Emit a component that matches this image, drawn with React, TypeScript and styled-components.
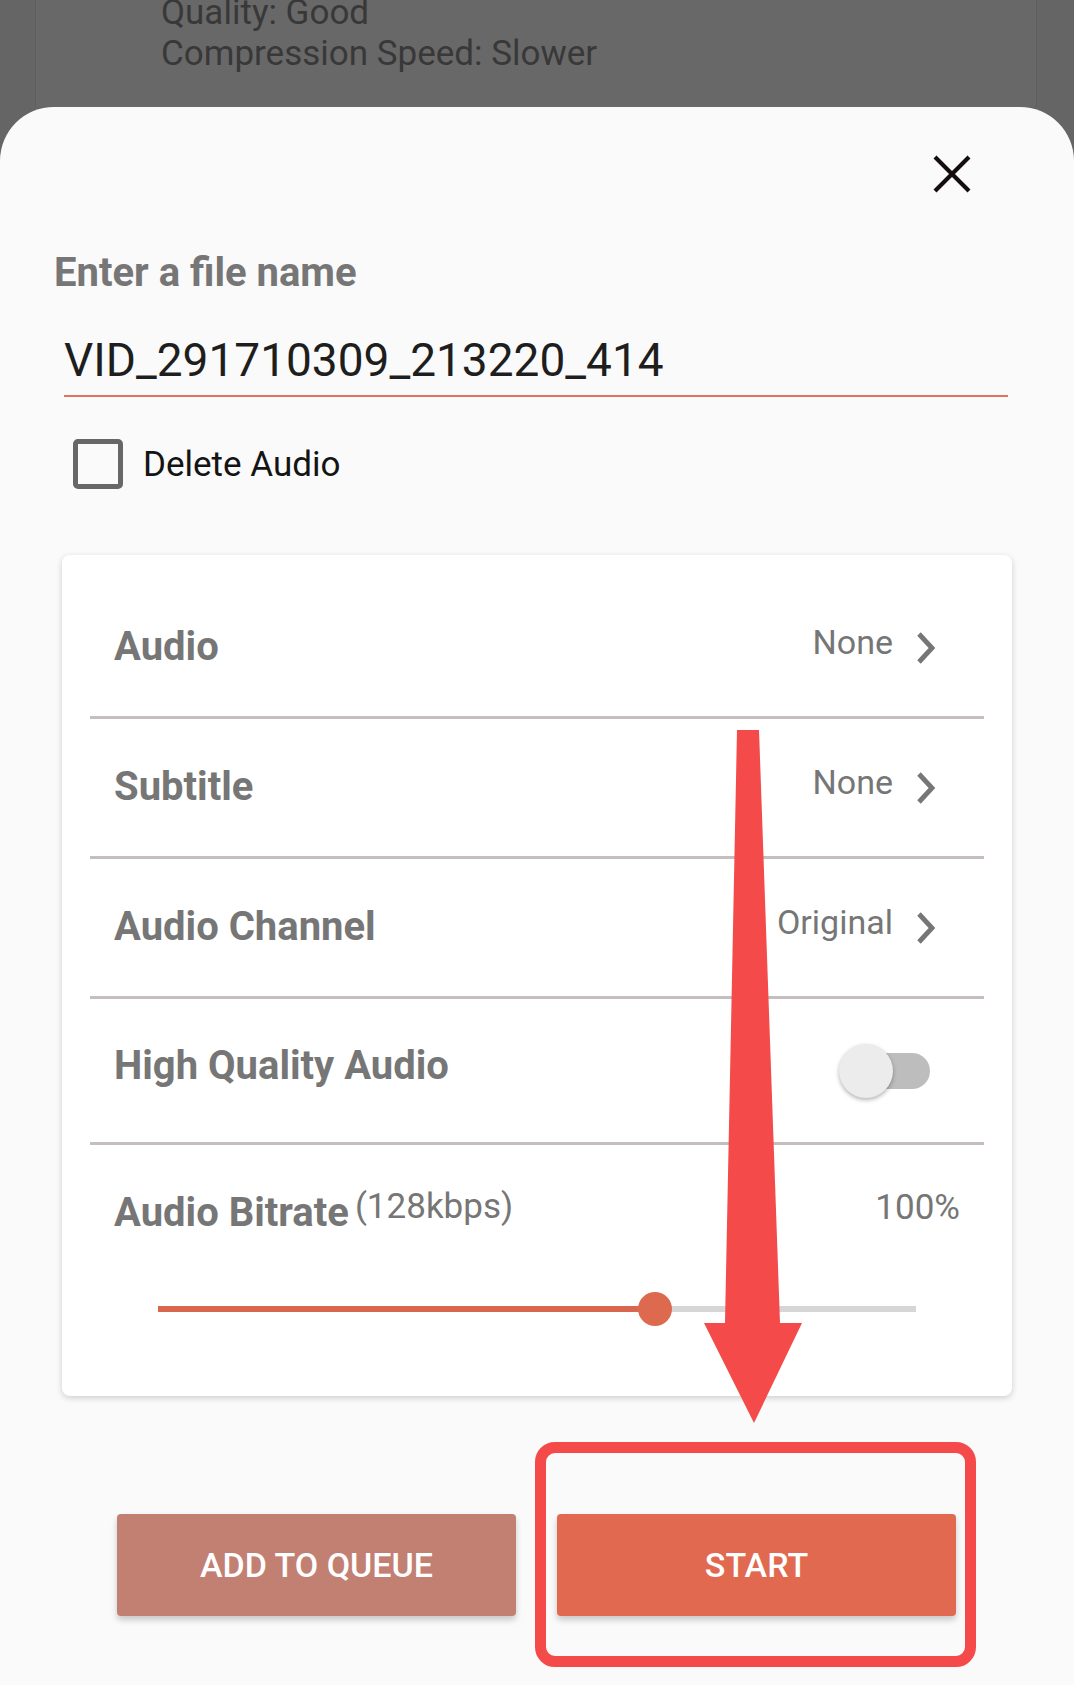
import styled, { createGlobalStyle } from "styled-components";

const GlobalStyle = createGlobalStyle`
  html, body {
    margin: 0;
    padding: 0;
    background: #656565;
    font-family: Roboto, "Liberation Sans", sans-serif;
  }
`;

const rows = [
  { label: "Audio", value: "None" },
  { label: "Subtitle", value: "None" },
  { label: "Audio Channel", value: "Original" },
];

const sliderValue = 0.656;

export default function App() {
  return (
    <>
      <GlobalStyle />
      <Page>
        <Behind>
          <BehindText>Quality: Good</BehindText>
          <BehindText>Compression Speed: Slower</BehindText>
        </Behind>
        <Sheet>
          <CloseRow>
            <CloseButton aria-label="close">
              <svg width="40" height="40" viewBox="0 0 40 40">
                <path d="M3 3 L37 37 M37 3 L3 37" stroke="#140d0d" strokeWidth="4.2" />
              </svg>
            </CloseButton>
          </CloseRow>
          <Title>Enter a file name</Title>
          <NameField>VID_291710309_213220_414</NameField>
          <CheckRow>
            <CheckBox />
            <CheckLabel>Delete Audio</CheckLabel>
          </CheckRow>
          <Card>
            {rows.map((r) => (
              <Row key={r.label}>
                <Label>{r.label}</Label>
                <Value>
                  {r.value}
                  <svg width="22" height="36" viewBox="0 0 22 36">
                    <path d="M4 4 L17 18 L4 32" fill="none" stroke="#767676" strokeWidth="4.8" />
                  </svg>
                </Value>
              </Row>
            ))}
            <Row $tall>
              <Label $up>High Quality Audio</Label>
              <Toggle>
                <Knob />
              </Toggle>
            </Row>
            <Bitrate>
              <BitrateHead>
                <Label>
                  Audio Bitrate<Small>(128kbps)</Small>
                </Label>
                <Percent>100%</Percent>
              </BitrateHead>
              <Track>
                <Fill style={{ width: `${sliderValue * 100}%` }} />
                <Thumb style={{ left: `${sliderValue * 100}%` }} />
              </Track>
            </Bitrate>
          </Card>
          <Buttons>
            <ActionButton $tone="queue">ADD TO QUEUE</ActionButton>
            <ActionButton $tone="start">START</ActionButton>
          </Buttons>
        </Sheet>
        <Highlight />
        <Arrow width="100" height="700" viewBox="0 0 100 700">
          <polygon points="33,0 55,0 76,593 98,593 50,693 0,593 21,593" fill="#f44b4a" />
        </Arrow>
      </Page>
    </>
  );
}

const Page = styled.div`
  position: relative;
  width: 1074px;
  height: 1685px;
  overflow: hidden;
  display: flex;
  flex-direction: column;
`;

const Behind = styled.div`
  margin: -8px 37px 0 35px;
  height: 115px;
  background: #686868;
  border-left: 1px solid #5e5e5e;
  border-right: 1px solid #5e5e5e;
  padding-left: 125px;
  display: flex;
  flex-direction: column;
`;

const BehindText = styled.div`
  font-size: 35px;
  line-height: 41px;
  color: #383838;
`;

const Sheet = styled.div`
  flex: 1;
  background: #fafafa;
  border-radius: 54px 54px 0 0;
  display: flex;
  flex-direction: column;
`;

const CloseRow = styled.div`
  display: flex;
  justify-content: flex-end;
  padding: 47px 102px 0 0;
`;

const CloseButton = styled.div`
  width: 40px;
  height: 40px;
`;

const Title = styled.div`
  margin: 56px 0 0 54px;
  font-size: 40px;
  font-weight: 700;
  color: #767676;
  line-height: 46px;
`;

const NameField = styled.div`
  margin: 37px 66px 0 64px;
  padding-bottom: 8px;
  font-size: 46px;
  line-height: 54px;
  color: #1e1e1e;
  border-bottom: 2.5px solid #e0735e;
`;

const CheckRow = styled.div`
  display: flex;
  align-items: center;
  gap: 20px;
  margin: 42px 0 0 73px;
`;

const CheckBox = styled.div`
  width: 40px;
  height: 40px;
  border: 5px solid #676767;
  border-radius: 5px;
`;

const CheckLabel = styled.div`
  font-size: 35px;
  color: #141414;
`;

const Card = styled.div`
  margin: 66px 62px 0 62px;
  background: #fff;
  border-radius: 8px;
  box-shadow: 0 2px 6px rgba(0, 0, 0, 0.18);
  padding: 24px 28px 0 28px;
`;

const Row = styled.div<{ $tall?: boolean }>`
  height: ${({ $tall }) => ($tall ? 143 : 137)}px;
  box-sizing: content-box;
  border-bottom: 3px solid #c6bebe;
  display: flex;
  align-items: center;
  justify-content: space-between;
  padding: 0 47px 0 24px;
`;

const Label = styled.div<{ $up?: boolean }>`
  font-size: 40px;
  font-weight: 700;
  color: #767676;
  margin-top: ${({ $up }) => ($up ? -10 : -2)}px;
  display: flex;
  align-items: flex-start;
`;

const Value = styled.div`
  display: flex;
  align-items: center;
  gap: 22px;
  font-size: 34px;
  color: #767676;
  margin-top: -12px;
  & svg {
    margin-top: 12px;
  }
`;

const Toggle = styled.div`
  position: relative;
  width: 76px;
  height: 36px;
  border-radius: 18px;
  background: #bdbdbd;
  margin-right: 7px;
`;

const Knob = styled.div`
  position: absolute;
  left: -15px;
  top: -9px;
  width: 54px;
  height: 54px;
  border-radius: 50%;
  background: #ececec;
  box-shadow: 0 2px 4px rgba(0, 0, 0, 0.3);
`;

const Bitrate = styled.div`
  padding: 46px 24px 84px 24px;
`;

const BitrateHead = styled.div`
  display: flex;
  justify-content: space-between;
  align-items: flex-start;
`;

const Small = styled.span`
  font-size: 35px;
  font-weight: 400;
  margin-left: 6px;
  margin-top: -3px;
`;

const Percent = styled.div`
  font-size: 35px;
  color: #767676;
  margin-top: -4px;
`;

const Track = styled.div`
  position: relative;
  margin: 70px 44px 0 44px;
  height: 6px;
  background: #d6d6d6;
`;

const Fill = styled.div`
  height: 100%;
  background: #d9664f;
`;

const Thumb = styled.div`
  position: absolute;
  top: 50%;
  width: 34px;
  height: 34px;
  border-radius: 50%;
  background: #dd694f;
  transform: translate(-50%, -50%);
`;

const Buttons = styled.div`
  display: flex;
  gap: 41px;
  margin: 118px 0 0 117px;
`;

const ActionButton = styled.div<{ $tone: "queue" | "start" }>`
  width: 399px;
  height: 102px;
  border-radius: 4px;
  display: flex;
  align-items: center;
  justify-content: center;
  font-size: 34px;
  font-weight: 500;
  color: #fff;
  background: ${({ $tone }) => ($tone === "start" ? "#e06950" : "#c28073")};
  box-shadow: 0 4px 6px rgba(0, 0, 0, 0.2);
`;

const Highlight = styled.div`
  position: absolute;
  left: 535px;
  top: 1442px;
  width: 441px;
  height: 225px;
  box-sizing: border-box;
  border: 11px solid #f44b4a;
  border-radius: 20px;
`;

const Arrow = styled.svg`
  position: absolute;
  left: 704px;
  top: 730px;
`;
